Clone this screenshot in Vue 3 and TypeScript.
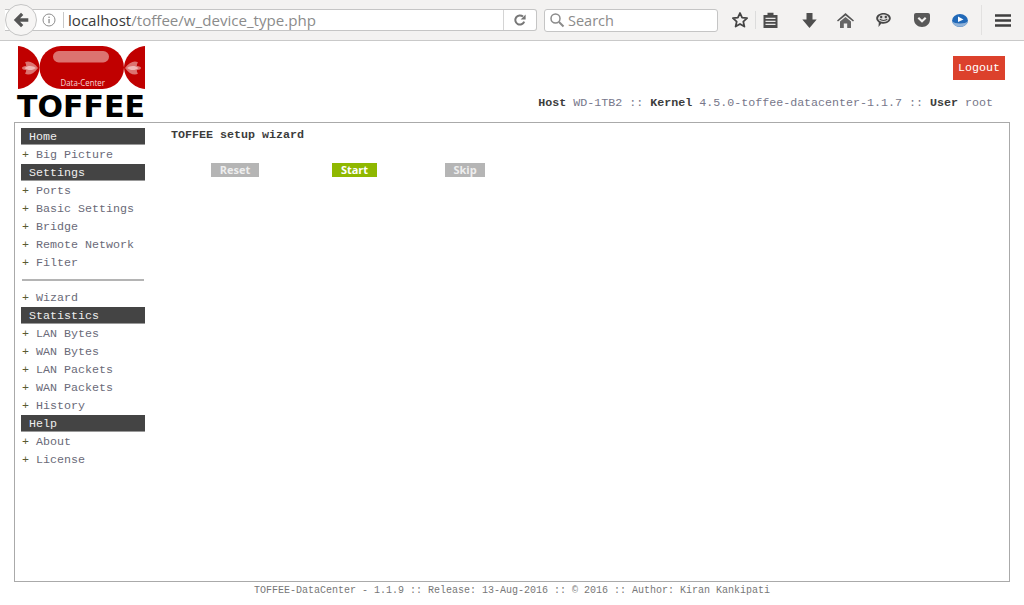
<script setup lang="ts">
interface Row { kind: 'head' | 'item' | 'rule'; label?: string }
const rows: Row[] = [
  { kind: 'head', label: 'Home' },
  { kind: 'item', label: 'Big Picture' },
  { kind: 'head', label: 'Settings' },
  { kind: 'item', label: 'Ports' },
  { kind: 'item', label: 'Basic Settings' },
  { kind: 'item', label: 'Bridge' },
  { kind: 'item', label: 'Remote Network' },
  { kind: 'item', label: 'Filter' },
  { kind: 'rule' },
  { kind: 'item', label: 'Wizard' },
  { kind: 'head', label: 'Statistics' },
  { kind: 'item', label: 'LAN Bytes' },
  { kind: 'item', label: 'WAN Bytes' },
  { kind: 'item', label: 'LAN Packets' },
  { kind: 'item', label: 'WAN Packets' },
  { kind: 'item', label: 'History' },
  { kind: 'head', label: 'Help' },
  { kind: 'item', label: 'About' },
  { kind: 'item', label: 'License' },
]
</script>

<template>
  <div class="page">
    <div class="toolbar">
      <div class="urlbar">
        <span class="back">
          <svg width="16" height="16" viewBox="0 0 16 16"><path d="M8 .8 .8 8 8 15.200l2.300-2.300-3.200-3.100h8.200V6.200H7.100l3.200-3.100z" fill="#555"/></svg>
        </span>
        <svg class="info" width="14" height="14" viewBox="0 0 14 14"><circle cx="7" cy="7" r="6" fill="none" stroke="#8d8d8d" stroke-width="1"/><rect x="6.400" y="6" width="1.300" height="4.200" fill="#8d8d8d"/><rect x="6.400" y="3.600" width="1.300" height="1.400" fill="#8d8d8d"/></svg>
        <span class="sep"></span>
        <span class="url"><span class="host">localhost</span>/toffee/w_device_type.php</span>
        <span class="reload">
          <svg width="14" height="14" viewBox="0 0 14 14"><path d="M11.200 8.600A4.600 4.600 0 1 1 10 3.600" fill="none" stroke="#777" stroke-width="2"/><path d="M12.600 1.600v5h-5z" fill="#777"/></svg>
        </span>
      </div>
      <div class="search">
        <svg width="16" height="16" viewBox="0 0 16 16"><circle cx="6.500" cy="6.500" r="4.500" fill="none" stroke="#8a8a8a" stroke-width="1.500"/><path d="m10 10 4.500 4.500" stroke="#8a8a8a" stroke-width="2"/></svg>
        <span>Search</span>
      </div>
      <div class="icons">
        <svg class="ic-star" width="18" height="18" viewBox="0 0 18 18"><path d="m9 2 2.100 4.700 5 .5-3.800 3.400 1.100 5L9 13l-4.400 2.600 1.100-5L1.900 7.200l5-.5z" fill="none" stroke="#444" stroke-width="1.800" stroke-linejoin="round"/></svg>
        <span class="thin"></span>
        <svg class="ic-list" width="15" height="16" viewBox="0 0 15 16"><path d="M.5 3h4V.8h6V3h4v13H.5z" fill="#4c4c4c"/><path d="M2.500 6.300h10M2.500 9.300h10M2.500 12.300h10" stroke="#e8e7e6" stroke-width="1.300"/></svg>
        <svg class="ic-down" width="15" height="15" viewBox="0 0 15 15"><path d="M4.500 0h6v6.500h4.200L7.500 15 .3 6.500h4.200z" fill="#4f4f4f"/></svg>
        <svg class="ic-home" width="17" height="15" viewBox="0 0 17 15"><path d="M8.500 0 0 7.500l1 1L8.500 2.500l7.500 6 1-1z" fill="#555"/><path d="M3 8.500 8.500 4l5.500 4.500V15h-3.800v-4.500H6.800V15H3z" fill="#666"/></svg>
        <svg class="ic-chat" width="15" height="14" viewBox="0 0 15 14"><path d="M7.500 0c4 0 7.300 2.300 7.300 5.300s-3.300 5.400-7.300 5.400c-.8 0-1.500-.1-2.200-.3L2.500 14l.3-4.500C1.200 8.500.2 7 .2 5.300.2 2.300 3.500 0 7.500 0z" fill="#474747"/><ellipse cx="7.500" cy="5.300" rx="5.400" ry="3.700" fill="#dedddc"/><circle cx="5.200" cy="4" r="1.200" fill="#474747"/><circle cx="9.800" cy="4" r="1.200" fill="#474747"/><path d="M3.800 6.200c1.500 1.700 6 1.700 7.400 0" fill="none" stroke="#474747" stroke-width="1.200"/></svg>
        <svg class="ic-pocket" width="16" height="14" viewBox="0 0 16 14"><path d="M2 0h12a2 2 0 0 1 2 2v4.500C16 10.700 12.500 14 8 14S0 10.700 0 6.500V2a2 2 0 0 1 2-2z" fill="#595959"/><path d="m4.300 4.700 3.700 3.500 3.700-3.500" fill="none" stroke="#f3f2f1" stroke-width="2.200"/></svg>
        <svg class="ic-play" width="16" height="13" viewBox="0 0 16 13"><ellipse cx="8" cy="6.500" rx="7.900" ry="6.400" fill="#2169b8"/><path d="M.3 7.500c1.500 7 13.900 7 15.400 0-2 2.500-13.400 2.500-15.400 0z" fill="#8fb2d8"/><path d="M6 2.500 11.500 5.500 6 8z" fill="#fff"/></svg>
        <span class="tall"></span>
        <svg class="ic-menu" width="16" height="13" viewBox="0 0 16 13"><path d="M0 1.500h16M0 6.500h16M0 11.500h16" stroke="#3f3f3f" stroke-width="2.600"/></svg>
      </div>
    </div>

    <header class="head">
      <svg class="logo" width="129" height="73" viewBox="17 45 129 73">
        <path d="M18 46C29 47 39 56 39.500 67.500 39 79 29 88 18 89z" fill="#c00000"/>
        <path d="M145 46C134 47 124.500 56 124 67.500 124.500 79 134 88 145 89z" fill="#c00000"/>
        <rect x="39.500" y="46" width="84.500" height="43" rx="21.500" fill="#c00000"/>
        <rect x="53" y="51" width="56" height="11.500" rx="5.750" fill="#dc7370"/>
        <path d="M38 68C34 62 28 60 25 62.500 26 64 26.500 65 26 66 23.500 66 22 67 22 68S23.500 70 26 70C26.500 71 26 72 25 73.500 28 76 34 74 38 68z" fill="#dc7370"/>
        <path d="M36 68C33 65.500 28 65 24.500 68 28 71 33 70.500 36 68z" fill="#f0b8b6"/>
        <path d="M125 68C129 62 135 60 138 62.500 137 64 136.500 65 137 66 139.500 66 141 67 141 68S139.500 70 137 70C136.500 71 137 72 138 73.500 135 76 129 74 125 68z" fill="#dc7370"/>
        <path d="M127 68C130 65.500 135 65 138.500 68 135 71 130 70.500 127 68z" fill="#f0b8b6"/>
        <text x="60.500" y="86" class="logo-sub" textLength="44.500" lengthAdjust="spacingAndGlyphs">Data-Center</text>
        <text x="17" y="117" class="logo-main" textLength="128" lengthAdjust="spacingAndGlyphs">TOFFEE</text>
      </svg>
      <div class="head-right">
        <a class="logout">Logout</a>
        <div class="status"><b>Host</b> WD-1TB2 :: <b>Kernel</b> 4.5.0-toffee-datacenter-1.1.7 :: <b>User</b> root</div>
      </div>
    </header>

    <main class="box">
      <nav class="side">
        <template v-for="(r, i) in rows" :key="i">
          <div v-if="r.kind === 'head'" class="side-head">{{ r.label }}</div>
          <div v-else-if="r.kind === 'item'" class="side-item"><span class="plus">+</span> {{ r.label }}</div>
          <div v-else class="side-rule"></div>
        </template>
      </nav>
      <section class="content">
        <h1>TOFFEE setup wizard</h1>
        <div class="buttons">
          <a class="btn reset">Reset</a>
          <a class="btn start">Start</a>
          <a class="btn skip">Skip</a>
        </div>
      </section>
    </main>

    <footer class="foot">TOFFEE-DataCenter - 1.1.9 :: Release: 13-Aug-2016 :: © 2016 :: Author: Kiran Kankipati</footer>
  </div>
</template>

<style>
html, body { margin: 0; background: #fff; }
</style>

<style scoped>
.page { width: 1024px; height: 605px; overflow: hidden; background: #fff; font-family: "Liberation Mono", monospace; font-size: 11.67px; color: #66667a; }

.toolbar { height: 40px; box-sizing: content-box; display: flex; align-items: center; background: #f3f2f1; border-bottom: 1px solid #c9c9c9; font-family: "Open Sans", sans-serif; }
.urlbar { margin-left: 5px; width: 532px; height: 22px; display: flex; align-items: center; background: #fff; border: 1px solid #c5c5c5; border-left: 0; border-radius: 0 3px 3px 0; box-sizing: border-box; }
.back { width: 32px; height: 32px; flex: none; display: flex; align-items: center; justify-content: center; background: #f6f5f4; border: 1px solid #c5c5c5; border-radius: 50%; box-sizing: border-box; }
.info { flex: none; margin-left: 5px; }
.sep { width: 1px; height: 16px; margin: 0 4px 0 7px; background: #c8c8c8; flex: none; }
.url { flex: 1; font-size: 15.1px; color: #8b8b8b; white-space: nowrap; }
.host { color: #3a3a3a; }
.reload { width: 33px; height: 20px; flex: none; display: flex; align-items: center; justify-content: center; border-left: 1px solid #d4d4d4; box-sizing: border-box; }
.search { margin-left: 7px; width: 174px; height: 23px; display: flex; align-items: center; gap: 3px; padding-left: 4px; box-sizing: border-box; background: #fff; border: 1px solid #c5c5c5; border-radius: 3px; color: #8b8b8b; font-size: 14.5px; }
.icons { display: flex; align-items: center; margin-left: 13px; }
.thin { width: 1px; height: 18px; background: #dcdcdc; margin: 0 7px 0 6px; }
.ic-list { margin-right: 24px; }
.ic-down { margin-right: 20px; }
.ic-home { margin-right: 22px; }
.ic-chat { margin-right: 23px; }
.ic-pocket { margin-right: 22px; }
.ic-play { margin-right: 13px; }
.tall { width: 1px; height: 30px; background: #e2e1e0; margin-right: 13px; }

.head { height: 81px; display: flex; box-sizing: border-box; padding: 4px 19px 0 17px; justify-content: space-between; }
.logo { display: block; overflow: visible; }
.logo-sub { font-family: "Open Sans", sans-serif; font-size: 8.500px; fill: #f6d6d6; }
.logo-main { font-family: "DejaVu Sans", sans-serif; font-size: 31px; font-weight: 700; fill: #000; }
.head-right { display: flex; flex-direction: column; align-items: flex-end; }
.logout { margin-top: 11px; width: 52px; height: 24px; display: flex; align-items: center; justify-content: center; background: #dc412c; color: #fff; font-size: 11.67px; }
.status { margin-top: 15px; margin-right: 12px; line-height: 16px; white-space: pre-wrap; color: #77778a; }
.status b { color: #3c3c3c; }

.box { margin: 0 14px; height: 460px; box-sizing: border-box; border: 1px solid #aaa; display: flex; }
.side { width: 130px; flex: none; box-sizing: border-box; padding: 5px 0 0 6px; }
.side-head { height: 16px; line-height: 18px; margin-bottom: 1px; padding-left: 8px; background: #444; border-bottom: 1px solid #999; color: #eee; }
.side-item { height: 18px; line-height: 18px; padding-left: 1px; white-space: pre; color: #6a6a78; }
.plus { color: #5a5a30; }
.side-rule { height: 2px; margin: 7px 1px 8px; background: #b4b4b4; }

.content { padding: 4px 0 0 26px; }
h1 { margin: 0; font-size: 11.67px; line-height: 16px; font-weight: 700; color: #3c3c3c; }
.buttons { display: flex; margin: 20px 0 0 40px; }
.btn { height: 14px; padding-bottom: 2px; display: flex; align-items: center; justify-content: center; color: #eee; font-family: "Open Sans", sans-serif; font-size: 11px; font-weight: 700; box-sizing: border-box; }
.reset { width: 48px; background: #b5b5b5; }
.start { width: 45px; margin-left: 73px; background: #8fb800; color: #fff; }
.skip { width: 40px; margin-left: 68px; background: #b5b5b5; }

.foot { margin-top: 2px; text-align: center; font-size: 10px; line-height: 14px; color: #777; }
</style>
